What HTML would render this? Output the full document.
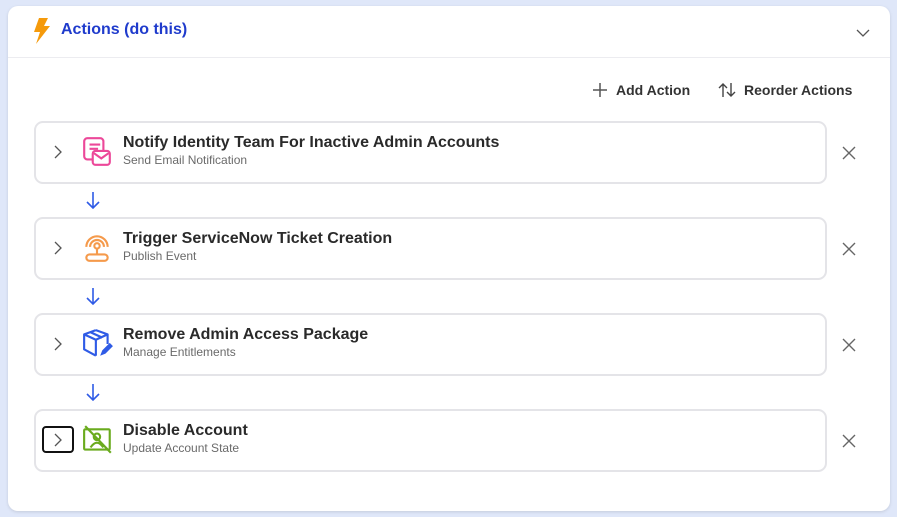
<!DOCTYPE html>
<html><head><meta charset="utf-8"><style>
*{box-sizing:border-box;margin:0;padding:0}
body{width:897px;height:517px;background:#dfe7f9;font-family:"Liberation Sans",sans-serif;position:relative;overflow:hidden}
.card{position:absolute;left:8px;top:6px;width:882px;height:505px;background:#fff;border-radius:10px;box-shadow:0 1px 3px rgba(0,0,0,.12)}
.hdr{height:52px;border-bottom:1px solid #ececf0;position:relative}
.hdr .t{position:absolute;left:53px;top:15px;font-size:16px;font-weight:bold;color:#1f3bcc}
.tool{position:absolute;top:76px;font-size:14px;font-weight:bold;color:#333;display:flex;align-items:center;gap:8px}
.row{position:absolute;left:26px;width:793px;height:63px;border:2px solid #e4e4e8;border-radius:9px}
.row .ti{position:absolute;left:87px;top:11px;font-size:16px;font-weight:bold;color:#2a2a2a}
.row .su{position:absolute;left:87px;top:30px;font-size:12px;color:#6a6a6a}
.row .ch{position:absolute;left:17px;top:22px}
.row .ic{position:absolute;left:46px;top:13px}
.x{position:absolute;left:833px}
.ar{position:absolute;left:77px}
</style></head><body>
<div class="card">
 <div class="hdr">
  <svg style="position:absolute;left:22px;top:11px" width="22" height="28" viewBox="0 0 22 28"><path d="M9 1h9l-4 8h6L6 27l4-12H4z" fill="#f59a0b"/></svg>
  <div class="t">Actions (do this)</div>
  <svg style="position:absolute;left:848px;top:22px" width="14" height="10" viewBox="0 0 14 10"><path d="M1 2l6 6 6-6" stroke="#555" stroke-width="1.3" fill="none"/></svg>
 </div>
 <div class="tool" style="left:584px"><svg width="16" height="16" viewBox="0 0 16 16"><path d="M8 1v14M1 8h14" stroke="#555" stroke-width="1.5"/></svg>Add Action</div>
 <div class="tool" style="left:710px"><svg width="18" height="16" viewBox="0 0 18 16"><path d="M5 15V2M1 6l4-4 4 4M13 1v13M9 10l4 4 4-4" stroke="#444" stroke-width="1.4" fill="none"/></svg>Reorder Actions</div>

 <div class="row" style="top:115px">
  <svg class="ch" width="10" height="14" viewBox="0 0 10 14"><path d="M2 1l6 6-6 6" stroke="#555" stroke-width="1.3" fill="none"/></svg>
  <svg class="ic" width="30" height="32" viewBox="0 0 28 30"><rect x="2" y="2" width="18" height="20" rx="3" stroke="#ec4899" stroke-width="2" fill="none"/><path d="M7 8h10M7 12h8" stroke="#ec4899" stroke-width="2"/><rect x="10" y="14" width="16" height="13" rx="2.5" fill="#fff" stroke="#ec4899" stroke-width="2"/><path d="M11 16l7 5 7-5" stroke="#ec4899" stroke-width="2" fill="none"/></svg>
  <div class="ti">Notify Identity Team For Inactive Admin Accounts</div><div class="su">Send Email Notification</div>
 </div>
 <div class="row" style="top:211px">
  <svg class="ch" width="10" height="14" viewBox="0 0 10 14"><path d="M2 1l6 6-6 6" stroke="#555" stroke-width="1.3" fill="none"/></svg>
  <svg class="ic" width="30" height="32" viewBox="0 0 28 30"><path d="M4 14a10 10 0 0 1 20 0M7.5 14a6.5 6.5 0 0 1 13 0" stroke="#f59a4b" stroke-width="2" fill="none"/><circle cx="14" cy="13" r="2.5" stroke="#f59a4b" stroke-width="2" fill="none"/><path d="M14 16v5" stroke="#f59a4b" stroke-width="2"/><rect x="4" y="21" width="20" height="6" rx="3" stroke="#f59a4b" stroke-width="2" fill="none"/></svg>
  <div class="ti">Trigger ServiceNow Ticket Creation</div><div class="su">Publish Event</div>
 </div>
 <div class="row" style="top:307px">
  <svg class="ch" width="10" height="14" viewBox="0 0 10 14"><path d="M2 1l6 6-6 6" stroke="#555" stroke-width="1.3" fill="none"/></svg>
  <svg class="ic" width="32" height="32" viewBox="0 0 30 30"><path d="M13 2l11 4v9M13 2L2 6v14l11 6M2 6l11 5 11-5M13 11v15M8 4l11 5" stroke="#2f5be6" stroke-width="2" fill="none" stroke-linejoin="round"/><path d="M17 26l2-5 7-7 3 3-7 7z" fill="#2f5be6"/></svg>
  <div class="ti">Remove Admin Access Package</div><div class="su">Manage Entitlements</div>
 </div>
 <div class="row" style="top:403px">
  <div style="position:absolute;left:6px;top:15px;width:32px;height:27px;border:2px solid #111;border-radius:4px"></div>
  <svg class="ch" width="10" height="14" viewBox="0 0 10 14"><path d="M2 1l6 6-6 6" stroke="#555" stroke-width="1.3" fill="none"/></svg>
  <svg class="ic" width="32" height="32" viewBox="0 0 30 30"><rect x="2" y="5" width="24" height="19" rx="1" stroke="#6aab1e" stroke-width="2" fill="none"/><circle cx="14" cy="12" r="3" stroke="#6aab1e" stroke-width="2" fill="none"/><path d="M8 22q6-9 12 0" stroke="#6aab1e" stroke-width="2" fill="none"/><path d="M3 2l24 25" stroke="#6aab1e" stroke-width="2"/></svg>
  <div class="ti">Disable Account</div><div class="su">Update Account State</div>
 </div>

 <svg class="x" style="top:139px" width="16" height="16" viewBox="0 0 16 16"><path d="M2 2l12 12M14 2L2 14" stroke="#666" stroke-width="1.4"/></svg>
 <svg class="x" style="top:235px" width="16" height="16" viewBox="0 0 16 16"><path d="M2 2l12 12M14 2L2 14" stroke="#666" stroke-width="1.4"/></svg>
 <svg class="x" style="top:331px" width="16" height="16" viewBox="0 0 16 16"><path d="M2 2l12 12M14 2L2 14" stroke="#666" stroke-width="1.4"/></svg>
 <svg class="x" style="top:427px" width="16" height="16" viewBox="0 0 16 16"><path d="M2 2l12 12M14 2L2 14" stroke="#666" stroke-width="1.4"/></svg>

 <svg class="ar" style="top:184px" width="16" height="20" viewBox="0 0 16 20"><path d="M8 2v16M2 12l6 6 6-6" stroke="#2f5be6" stroke-width="1.6" fill="none"/></svg>
 <svg class="ar" style="top:280px" width="16" height="20" viewBox="0 0 16 20"><path d="M8 2v16M2 12l6 6 6-6" stroke="#2f5be6" stroke-width="1.6" fill="none"/></svg>
 <svg class="ar" style="top:376px" width="16" height="20" viewBox="0 0 16 20"><path d="M8 2v16M2 12l6 6 6-6" stroke="#2f5be6" stroke-width="1.6" fill="none"/></svg>
</div>
</body></html>
